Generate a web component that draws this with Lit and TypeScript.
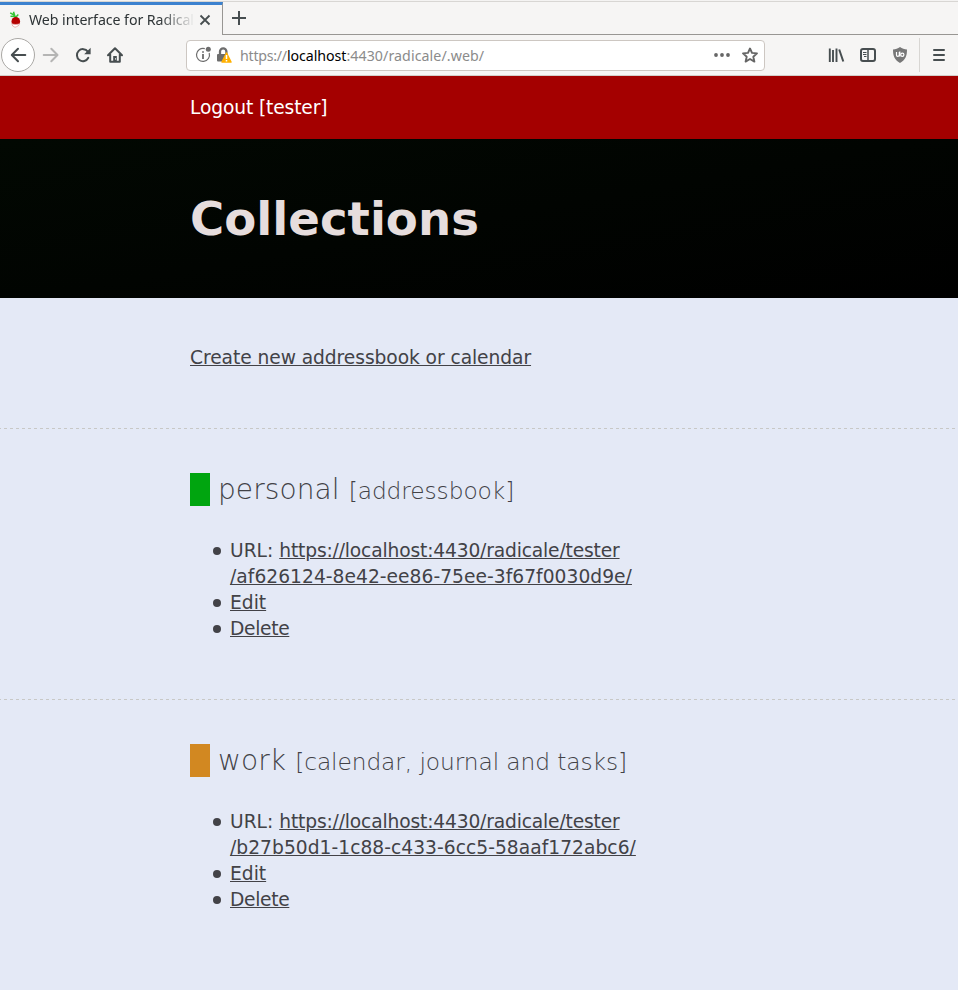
import { LitElement, html, css, svg } from "lit";
import { customElement, property } from "lit/decorators.js";

interface Collection {
  name: string;
  kind: string;
  color: string;
  base: string;
  id: string;
}

const collections: Collection[] = [
  { name: "personal", kind: "[addressbook]", color: "#00a50f", base: "https://localhost:4430/radicale/tester", id: "/af626124-8e42-ee86-75ee-3f67f0030d9e/" },
  { name: "work", kind: "[calendar, journal and tasks]", color: "#d28821", base: "https://localhost:4430/radicale/tester", id: "/b27b50d1-1c88-c433-6cc5-58aaf172abc6/" },
];

const s = "#474e50";
const icons: Record<string, unknown> = {
  radish: svg`<path d="M8.300 5.500L6.500 -.3M7 3L3.200 .8M7.500 4.500L3.500 4.200M8.500 5.500L11.300 2.500" stroke="#35c435" stroke-width="1.500" fill="none"/><circle cx="8.800" cy="9.400" r="4.300" fill="#b50000"/><path d="M4.800 11.500Q8.500 13.200 12.600 11.500Q12 14 9.500 14.700L8 15.300Q5 14.500 4.800 11.500Z" fill="#fff" stroke="#d26a6a" stroke-width=".5"/>`,
  close: svg`<path d="M3.500 3.500L12.500 12.500M12.500 3.500L3.500 12.500" stroke="${s}" stroke-width="1.800"/>`,
  plus: svg`<path d="M8 1V15M1 8H15" stroke="${s}" stroke-width="2"/>`,
  back: svg`<path d="M15.300 8H2M8 1.800L1.800 8L8 14.200" fill="none" stroke="${s}" stroke-width="2" stroke-linecap="round" stroke-linejoin="round"/>`,
  forward: svg`<path d="M.7 8H14M8.300 1.800L14.500 8L8.300 14.200" fill="none" stroke="#b5b5b4" stroke-width="2" stroke-linecap="round" stroke-linejoin="round"/>`,
  reload: svg`<path d="M13.300 10.800A6 6 0 1 1 12.800 4.600" fill="none" stroke="${s}" stroke-width="2" stroke-linecap="round"/><path d="M15.600 .8V7.200H9.200Z" fill="${s}"/>`,
  home: svg`<path d="M1 8.300L8 1.300L15 8.300M3.200 7.500V14.800H12.800V7.500" fill="none" stroke="${s}" stroke-width="2" stroke-linecap="round" stroke-linejoin="round"/><path d="M6.200 15V9H9.800V15Z" fill="${s}"/><path d="M8.500 11.300V12.500" stroke="#fff" stroke-width="1"/>`,
  info: svg`<path d="M9.800 1.700A6.500 6.500 0 1 0 14.200 6" fill="none" stroke="#6d6d6d" stroke-width="1.200"/><path d="M8 7V12M8 4.200V5.800" stroke="#6d6d6d" stroke-width="1.800"/><circle cx="13.300" cy="2.200" r="2.500" fill="#6d6d6d"/>`,
  lock: svg`<path d="M4 8V4.500A3.200 3.200 0 0 1 10.400 4.500V8" fill="none" stroke="#6d6d6d" stroke-width="2.300"/><rect x="1" y="7" width="11" height="7.500" rx="1" fill="#6d6d6d"/><path d="M10.500 6L15 15H6Z" fill="#ffb000" stroke="#ffb000" stroke-width="1.500" stroke-linejoin="round"/><path d="M10.500 8V12M10.500 13V14.500" stroke="#fff" stroke-width="1.500"/>`,
  dots: svg`<circle cx="2" cy="8" r="1.900" fill="#666"/><circle cx="8" cy="8" r="1.900" fill="#666"/><circle cx="14" cy="8" r="1.900" fill="#666"/>`,
  star: svg`<path d="M8 1.500L10 5.900L15 6.400L11.300 9.700L12.400 14.600L8 12L3.600 14.600L4.700 9.700L1 6.400L6 5.900Z" fill="none" stroke="#666" stroke-width="1.900" stroke-linejoin="round"/>`,
  library: svg`<path d="M1.800 1.500V15M5 3V15M8.500 1.500V15" stroke="${s}" stroke-width="1.900"/><path d="M11.200 2.500L15.300 14.500" stroke="${s}" stroke-width="2"/>`,
  sidebar: svg`<rect x="1" y="2" width="14" height="12" rx="2" fill="none" stroke="${s}" stroke-width="2"/><path d="M8 2V14" stroke="${s}" stroke-width="1.500"/><path d="M3 5.500H6.500M3 7.500H6.500M4 9.500H6.500" stroke="${s}" stroke-width="1"/>`,
  shield: svg`<path d="M8 0C10 1.700 12.500 2.400 15 2.400C15 9 13.500 12.500 8 16C2.500 12.500 1 9 1 2.400C3.500 2.400 6 1.700 8 0Z" fill="#777"/><path d="M4.500 5V8Q4.500 9.300 5.700 9.300Q7.300 9.300 7.300 8V5M7.800 4.500V9.500" fill="none" stroke="#fff" stroke-width="1.200"/><circle cx="10.300" cy="7.700" r="1.600" fill="none" stroke="#fff" stroke-width="1.200"/>`,
  menu: svg`<path d="M3 3H13M3 8H13M3 13H13" stroke="${s}" stroke-width="2" stroke-linecap="round"/>`,
};

@customElement("ui-icon")
class UiIcon extends LitElement {
  @property() name = "";
  static styles = css`
    :host { display: block; width: 16px; height: 16px; flex: none; }
    svg { display: block; width: 100%; height: 100%; overflow: visible; }
  `;
  render() {
    return html`<svg viewBox="0 0 16 16">${icons[this.name]}</svg>`;
  }
}

@customElement("browser-chrome")
class BrowserChrome extends LitElement {
  static styles = css`
    :host { display: block; height: 76px; box-sizing: border-box; background: #f6f5f4; font: 14.2px/20px "Noto Sans", sans-serif; color: #2e3436; border-bottom: 1px solid #d2cfca; }
    .tabs { display: flex; height: 35px; box-sizing: border-box; padding-top: 2px; background: linear-gradient(#f4f3f2 0 1px, #d8d6d3 1px 2px, #f6f5f4 2px); }
    .tab { box-sizing: border-box; width: 223px; height: 33px; border-top: 3px solid #3c82cf; border-right: 1px solid #989693; display: flex; align-items: center; padding-left: 7px; }
    .title { width: 166px; margin-left: 6px; white-space: nowrap; letter-spacing: -0.07px; -webkit-mask-image: linear-gradient(90deg, #000 130px, transparent 166px); mask-image: linear-gradient(90deg, #000 130px, transparent 166px); }
    .close { margin-left: 2px; }
    .rest { flex: 1; border-bottom: 1px solid #989693; padding: 8px 0 0 8px; box-sizing: border-box; }
    .bar { display: flex; align-items: center; height: 40px; }
    .back { box-sizing: border-box; width: 34px; height: 34px; border: 1px solid #aaa8a5; border-radius: 50%; margin-left: 1px; background: #fff; display: grid; place-items: center; }
    .forward { margin-left: 8px; }
    .reload, .home { margin-left: 16px; }
    .address { box-sizing: border-box; width: 579px; height: 31px; margin-left: 63px; border: 1px solid #cdc7c2; border-radius: 4px; background: #fff; display: flex; align-items: center; padding: 0 6px 0 8px; }
    .lock { margin-left: 5px; }
    .url { flex: 1; margin-left: 8px; padding-top: 2px; color: #8b8b8b; white-space: nowrap; }
    .scheme { letter-spacing: -0.25px; }
    .host { color: #000; letter-spacing: -0.05px; }
    .rest-url { letter-spacing: 0.08px; }
    .star { margin-left: 12px; }
    .library { margin-left: 63px; }
    .tool { margin-left: 16px; }
    .sep { width: 1px; height: 34px; background: #d8d6d3; margin: 0 11px; }
  `;
  render() {
    return html`
      <div class="tabs">
        <div class="tab"><ui-icon name="radish"></ui-icon><span class="title">Web interface for Radical</span><ui-icon class="close" name="close"></ui-icon></div>
        <div class="rest"><ui-icon name="plus"></ui-icon></div>
      </div>
      <div class="bar">
        <div class="back"><ui-icon name="back"></ui-icon></div>
        <ui-icon class="forward" name="forward"></ui-icon>
        <ui-icon class="reload" name="reload"></ui-icon>
        <ui-icon class="home" name="home"></ui-icon>
        <div class="address">
          <ui-icon name="info"></ui-icon><ui-icon class="lock" name="lock"></ui-icon>
          <span class="url"><span class="scheme">https://</span><span class="host">localhost</span><span class="rest-url">:4430/radicale/.web/</span></span>
          <ui-icon name="dots"></ui-icon><ui-icon class="star" name="star"></ui-icon>
        </div>
        <ui-icon class="library" name="library"></ui-icon>
        <ui-icon class="tool" name="sidebar"></ui-icon>
        <ui-icon class="tool" name="shield"></ui-icon>
        <div class="sep"></div>
        <ui-icon name="menu"></ui-icon>
      </div>
    `;
  }
}

@customElement("app-root")
class AppRoot extends LitElement {
  static styles = css`
    :host { display: block; height: 990px; overflow: hidden; background: #e4e9f6; color: #424247; font: 18.667px/26.133px "DejaVu Sans", sans-serif; }
    nav { box-sizing: border-box; height: 63px; padding: 19px 190px 0; background: #a40000; color: #fff; letter-spacing: -0.13px; }
    header { box-sizing: border-box; height: 159px; padding: 48px 190px 0; background: linear-gradient(170deg, #020802, #000); color: #e6dddd; }
    h1 { margin: 0; font-size: 46.667px; line-height: 65.333px; font-weight: bold; }
    section { box-sizing: border-box; height: 271px; padding: 42px 190px 0; background: repeating-linear-gradient(90deg, #c8c8c6 0 3px, transparent 3px 6px) -2px 100% / 966px 1px no-repeat; }
    .create { height: 131px; padding-top: 47px; letter-spacing: -0.065px; }
    section:last-child { background: none; }
    a { color: inherit; text-decoration: underline; }
    h2 { margin: 0; height: 36px; padding-top: 1px; box-sizing: border-box; font-size: 28px; line-height: 36px; font-weight: 200; display: flex; align-items: baseline; white-space: nowrap; letter-spacing: 0.1px; }
    .swatch { align-self: flex-start; width: 20px; height: 33px; margin: 1px 8px 0 0; }
    small { font-size: 23.333px; margin-left: 9px; letter-spacing: -0.1px; }
    ul { margin: 31px 0 0; padding-left: 40px; list-style: none; }
    li { position: relative; }
    li::before { content: ""; position: absolute; left: -17px; top: 9px; width: 8px; height: 8px; border-radius: 50%; background: #424247; }
    .path { white-space: nowrap; }
    .base { letter-spacing: -0.16px; }
    .id { letter-spacing: 0.035px; }
    .delete { letter-spacing: -0.33px; }
  `;
  render() {
    return html`
      <browser-chrome></browser-chrome>
      <nav>Logout [tester]</nav>
      <header><h1>Collections</h1></header>
      <main>
        <section class="create"><a>Create new addressbook or calendar</a></section>
        ${collections.map(c => html`
          <section>
            <h2><span class="swatch" style="background:${c.color}"></span><span>${c.name}</span><small>${c.kind}</small></h2>
            <ul>
              <li>URL: <a class="path"><span class="base">${c.base}</span><br><span class="id">${c.id}</span></a></li>
              <li><a>Edit</a></li>
              <li><a class="delete">Delete</a></li>
            </ul>
          </section>`)}
      </main>
    `;
  }
}
